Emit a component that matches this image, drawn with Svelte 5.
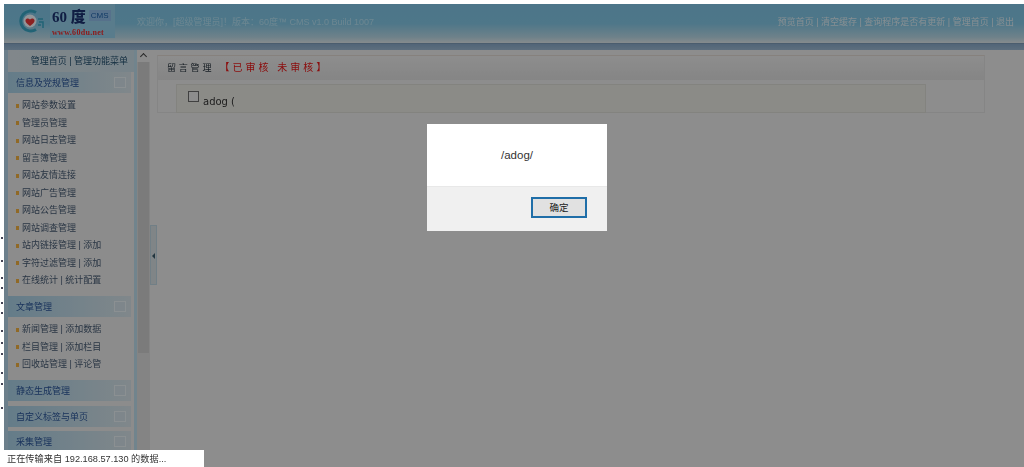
<script lang="ts">
  type Group = { title: string; items: string[] };

  const groups: Group[] = [
    {
      title: '信息及党规管理',
      items: [
        '网站参数设置',
        '管理员管理',
        '网站日志管理',
        '留言簿管理',
        '网站友情连接',
        '网站广告管理',
        '网站公告管理',
        '网站调查管理',
        '站内链接管理 | 添加',
        '字符过滤管理 | 添加',
        '在线统计 | 统计配置'
      ]
    },
    {
      title: '文章管理',
      items: ['新闻管理 | 添加数据', '栏目管理 | 添加栏目', '回收站管理 | 评论管']
    },
    { title: '静态生成管理', items: [] },
    { title: '自定义标签与单页', items: [] },
    { title: '采集管理', items: [] }
  ];

  // bits of the window behind, showing in the strip left of the frame
  const ticks = [237, 260, 277, 287, 302, 312, 330, 342, 353, 372, 383, 407];
</script>

<div class="page">
  {#each ticks as y (y)}
    <i class="tick" style="top: {y}px"></i>
  {/each}
  <div class="shell">
    <header class="top">
      <div class="brand">
        <div class="logo">
          <svg width="25" height="26" viewBox="0 0 25 26" aria-hidden="true">
            <path d="M17 4.500A10 10 0 1 0 17 21.500" fill="none" stroke="#39a5c4" stroke-width="3" />
            <circle cx="11" cy="13" r="6.500" fill="#f4fbff" />
            <path d="M11 18c-3.500-2.500-5-4.500-4.500-6 .5-1.800 3-2.200 4.500-.5 1.500-1.700 4-1.300 4.500.5.5 1.500-1 3.500-4.500 6z" fill="#e8383a" />
            <path d="M19 11h5M20 14h4v6M19 17h3" fill="none" stroke="#39a5c4" stroke-width="1.500" />
          </svg>
          <div class="logo-text">
            <div class="logo-line"><b>60 度</b><span class="cms">CMS</span></div>
            <div class="url">www.60du.net</div>
          </div>
        </div>
        <p class="welcome">欢迎你，[超级管理员]！版本：60度™ CMS v1.0 Build 1007</p>
      </div>
      <nav class="links">预览首页 | 清空缓存 | 查询程序是否有更新 | 管理首页 | 退出</nav>
    </header>
    <div class="band"></div>

    <div class="body">
      <aside class="side">
        <div class="side-top">管理首页 | 管理功能菜单</div>
        {#each groups as group (group.title)}
          <section class="group">
            <h3>
              <span>{group.title}</span>
              <i class="toggle"></i>
            </h3>
            {#if group.items.length}
              <ul>
                {#each group.items as item (item)}
                  <li>{item}</li>
                {/each}
              </ul>
            {/if}
          </section>
        {/each}
      </aside>

      <div class="scroll">
        <div class="arrow"></div>
        <div class="thumb"></div>
      </div>

      <div class="split">
        <div class="tab"></div>
      </div>

      <main class="main">
        <div class="panel">
          <div class="panel-head">留言管理 <em>【已审核 未审核】</em></div>
          <div class="row">
            <span class="check"></span>
            <span class="name">adog (</span>
          </div>
        </div>
      </main>
    </div>
  </div>

  <div class="overlay">
    <div class="dialog">
      <div class="msg">/adog/</div>
      <div class="actions">
        <button type="button">确定</button>
      </div>
    </div>
  </div>

  <div class="status">正在传输来自 192.168.57.130 的数据...</div>
</div>

<style>
  :global(body) {
    background: #fff;
    overflow: hidden;
  }
  .page {
    position: relative;
    width: 1024px;
    height: 467px;
    overflow: hidden;
    background: #fff;
    padding: 4px 0 0 4px;
    box-sizing: border-box;
    font-family: "Liberation Sans", "Noto Sans CJK SC", sans-serif;
  }
  .tick {
    position: absolute;
    left: 1px;
    width: 2px;
    height: 2px;
    background: #445;
  }
  .shell {
    height: 463px;
    display: flex;
    flex-direction: column;
    background: #ececec;
    filter: blur(0.75px);
  }

  .top {
    height: 39px;
    flex: none;
    box-sizing: border-box;
    display: flex;
    justify-content: space-between;
    align-items: center;
    background: linear-gradient(#7fc4e4 0, #82c6e4 50%, #b8d8e6 85%, #e0e8ec 100%);
    padding: 0 10px 5px 15px;
  }
  .brand {
    display: flex;
    align-items: center;
  }
  .logo {
    width: 118px;
    display: flex;
    gap: 6px;
    align-items: center;
  }
  .logo-text {
    display: flex;
    flex-direction: column;
    line-height: 1;
    padding: 1px 4px 1px 2px;
    background: #94cfea;
  }
  .logo-line {
    display: flex;
    align-items: center;
    gap: 3px;
    color: #1c3270;
    font: bold 15px "Liberation Serif", "Noto Sans CJK SC", serif;
  }
  .cms {
    font: 8px "Liberation Sans", sans-serif;
    color: #1c5fa8;
    background: #8fbde8;
    padding: 1px 2px;
  }
  .url {
    font: bold 8px "Liberation Serif", serif;
    color: #e83030;
    margin-top: 2px;
    letter-spacing: 0.3px;
  }
  .welcome {
    margin: 0;
    font-size: 9px;
    color: #b4e0f2;
  }
  .links {
    font-size: 9px;
    color: #e0eef4;
  }
  .band {
    height: 7px;
    flex: none;
    background: linear-gradient(#88a8c8, #9cb8d2);
    border-top: 1px solid #7e9cb8;
    box-sizing: border-box;
  }

  .body {
    flex: 1;
    min-height: 0;
    display: flex;
    overflow: hidden;
  }
  .side {
    width: 133px;
    flex: none;
    box-sizing: border-box;
    background: #eaeaea;
    border-left: 4px solid #b4d4e8;
    border-right: 3px solid #bcdcec;
    padding-right: 3px;
    overflow: hidden;
  }
  .side-top {
    height: 22px;
    line-height: 23px;
    font-size: 9px;
    text-align: right;
    padding-right: 6px;
    color: #24506e;
    background: linear-gradient(90deg, #d8e2e8, #c8dce6);
    margin-right: -3px;
  }
  .group {
    margin-bottom: 4.500px;
  }
  h3 {
    margin: 0;
    height: 21px;
    display: flex;
    align-items: center;
    justify-content: space-between;
    padding: 0 5px 0 8px;
    background: linear-gradient(90deg, #a8cfe4, #d6e2e8);
    font-size: 9px;
    font-weight: normal;
    color: #2a5498;
  }
  .toggle {
    width: 10px;
    height: 9px;
    border: 1px solid #e8f0f4;
    background: #d2e0e8;
  }
  ul {
    list-style: none;
    margin: 0;
    padding: 4px 0 2px;
  }
  li {
    height: 17.500px;
    line-height: 17.500px;
    font-size: 9px;
    color: #465a72;
    padding-left: 8px;
    display: flex;
    align-items: center;
    white-space: pre;
  }
  li::before {
    content: '';
    width: 3px;
    height: 4px;
    background: #f0b040;
    margin-right: 3px;
  }

  .scroll {
    width: 13px;
    flex: none;
    background: #dcdcdc;
    display: flex;
    flex-direction: column;
  }
  .arrow {
    height: 12px;
    flex: none;
    background: #e9e9e9;
    position: relative;
  }
  .arrow::after {
    content: '';
    position: absolute;
    left: 4px;
    top: 4px;
    width: 4px;
    height: 4px;
    border-left: 1px solid #444;
    border-top: 1px solid #444;
    transform: rotate(45deg);
  }
  .thumb {
    height: 291px;
    flex: none;
    margin: 0 1px;
    background: #cdcdcd;
  }
  .split {
    width: 7px;
    flex: none;
    background: #ececec;
    padding-top: 175px;
  }
  .tab {
    height: 60px;
    box-sizing: border-box;
    border: 1px solid #bcd4e0;
    background: #d6dee2;
    position: relative;
  }
  .tab::after {
    content: '';
    position: absolute;
    left: 1px;
    top: 27px;
    border: 3px solid transparent;
    border-left: 0;
    border-right: 3px solid #3a5a6a;
  }

  .main {
    flex: 1;
    min-width: 0;
    padding: 5px 39px 0 0;
  }
  .panel {
    height: 58px;
    box-sizing: border-box;
    border: 1px solid #dedede;
    border-top-color: #e0d8d0;
    background: #ececec;
  }
  .panel-head {
    height: 24px;
    line-height: 23px;
    padding-left: 9px;
    font-size: 9px;
    letter-spacing: 2.800px;
    color: #26323c;
    background: linear-gradient(#ececec, #dedede);
  }
  em {
    font-style: normal;
    font-size: 10px;
    color: #e81818;
    letter-spacing: 3px;
  }
  .row {
    margin: 4px 0 0 18px;
    width: 750px;
    height: 29px;
    box-sizing: border-box;
    border: 1px solid #dadad4;
    background: #e8e8e2;
    padding-left: 11px;
    display: flex;
    gap: 4px;
  }
  .check {
    width: 11px;
    height: 11px;
    margin-top: 6px;
    box-sizing: border-box;
    border: 1px solid #6c6c6c;
    background: #ececec;
  }
  .name {
    font: 10px "DejaVu Sans", sans-serif;
    color: #333;
    margin-top: 11px;
  }

  .overlay {
    position: absolute;
    inset: 4px 0 0 4px;
    background: rgba(0, 0, 0, 0.4);
  }
  .dialog {
    position: absolute;
    left: 423px;
    top: 120px;
    width: 180px;
    height: 107px;
    display: flex;
    flex-direction: column;
    background: #fff;
  }
  .msg {
    height: 62px;
    flex: none;
    box-sizing: border-box;
    padding-top: 25px;
    text-align: center;
    font: 11.500px "Liberation Sans", sans-serif;
    color: #333;
  }
  .actions {
    flex: 1;
    background: #f0f0f0;
    border-top: 1px solid #e8e8e8;
    display: flex;
    justify-content: flex-end;
    padding: 10px 20px 0 0;
  }
  button {
    width: 56px;
    height: 21px;
    box-sizing: border-box;
    border: 2px solid #1f6ea8;
    background: #e1e1e1;
    font-family: "Noto Sans CJK SC", sans-serif;
    font-size: 9.500px;
    line-height: 14px;
    color: #222;
    padding: 0 0 2px;
  }

  .status {
    position: absolute;
    left: 3px;
    bottom: 0;
    width: 201px;
    height: 17px;
    box-sizing: border-box;
    padding-left: 4px;
    line-height: 18px;
    background: #fff;
    font-size: 9.200px;
    color: #333;
    filter: blur(0.3px);
  }
</style>
